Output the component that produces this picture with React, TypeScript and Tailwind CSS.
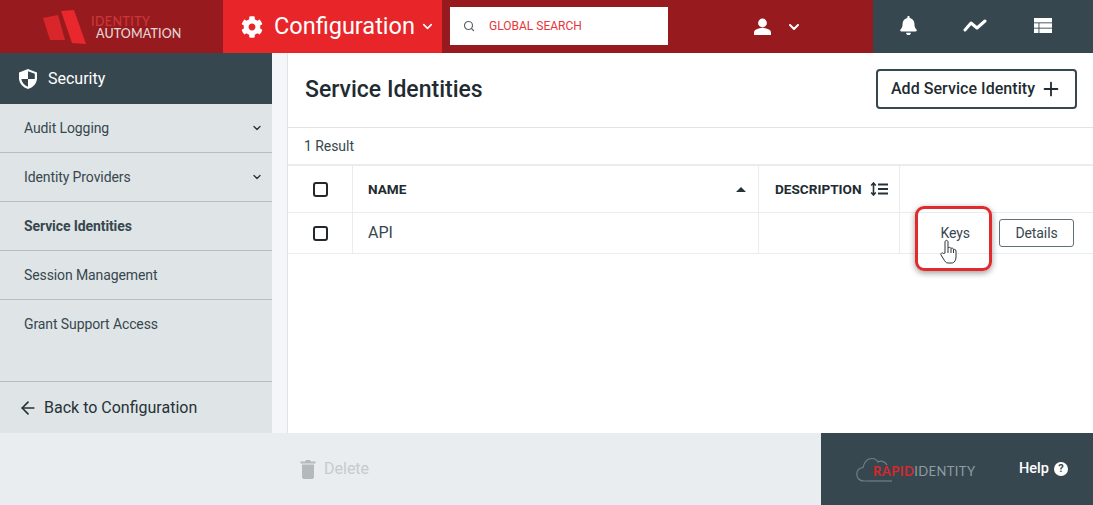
import { ChevronDown, Plus, Search, ArrowLeft } from "lucide-react";
import { FaBell, FaCog } from "react-icons/fa";

const navItems = [
  { label: "Audit Logging", chevron: true },
  { label: "Identity Providers", chevron: true },
  { label: "Service Identities", active: true },
  { label: "Session Management" },
  { label: "Grant Support Access", last: true },
];

const Checkbox = () => (
  <div className="w-[15px] h-[15px] rounded-[3px] border-2 border-[#23282c] bg-white" />
);

const App = () => {
  return (
    <div className="w-[1093px] h-[505px] relative overflow-hidden flex flex-col bg-white text-[#263238] font-['Roboto',sans-serif]">
      {/* top bar */}
      <header className="h-[53px] flex shrink-0 bg-[#971b1e]">
        <div className="w-[223px] flex items-center pl-[42px]">
          <svg width="46" height="36" viewBox="0 0 46 36" className="shrink-0">
            <path d="M1 9 L16 6 L23 31 L8 31 Z" fill="#d9262a" />
            <path d="M19 2 L32 1 L44 35 L30 34 Z" fill="#e8282c" />
          </svg>
          <div className="ml-[3px] mt-[3px] text-[12.5px] leading-[12px] font-['Lato',sans-serif]">
            <div className="text-[#c9373a] font-medium tracking-[0.4px]">IDENTITY</div>
            <div className="ml-[5px] text-[#e3d6d6] font-medium tracking-[0.1px]">AUTOMATION</div>
          </div>
        </div>
        <div className="w-[219px] bg-[#e8262a] flex items-center pl-[18px] text-white">
          <FaCog size={22} className="shrink-0" />
          <span className="ml-[11px] text-[23.5px] leading-none whitespace-nowrap">Configuration</span>
          <ChevronDown size={15} strokeWidth={2.5} className="ml-[5px] shrink-0" />
        </div>
        <div className="ml-[8px] mt-[7px] w-[218px] h-[38px] bg-white flex items-center pl-[13px]">
          <Search size={12} className="text-[#5b6469]" strokeWidth={2.4} />
          <span className="ml-[14px] text-[12px] text-[#e8353a]">GLOBAL SEARCH</span>
        </div>
        <div className="w-[205px] flex items-center pl-[85px] text-white">
          <svg width="19" height="17" viewBox="0 0 18 17" fill="white">
            <circle cx="9" cy="5" r="4.4" />
            <path d="M0.5 17 V14.5 C0.5 11.5 5 10 9 10 C13 10 17.5 11.5 17.5 14.5 V17 Z" />
          </svg>
          <ChevronDown size={16} strokeWidth={3} className="ml-[14px]" />
        </div>
        <div className="flex-1 bg-[#37474f] flex items-center text-white pl-[26px] pb-[3px]">
          <FaBell size={19} />
          <svg width="24" height="13" viewBox="0 0 24 13" className="ml-[45px]" fill="none" stroke="white" strokeWidth="3" strokeLinecap="round" strokeLinejoin="round">
            <path d="M2 11 L8 4 L14 9 L22 2" />
          </svg>
          <svg width="18" height="15" viewBox="0 0 18 15" className="ml-[47px]" fill="white">
            <rect x="0" y="0" width="18" height="4.4" />
            <rect x="0" y="5.3" width="4.5" height="4.4" />
            <rect x="5.4" y="5.3" width="12.6" height="4.4" />
            <rect x="0" y="10.6" width="4.5" height="4.4" />
            <rect x="5.4" y="10.6" width="12.6" height="4.4" />
          </svg>
        </div>
      </header>

      <div className="flex flex-1 min-h-0">
        {/* sidebar */}
        <aside className="w-[272px] bg-[#dfe4e6] flex flex-col shrink-0">
          <div className="h-[51px] bg-[#37474f] flex items-center pl-[18px] text-white">
            <svg width="20" height="22" viewBox="0 0 20 22">
              <path d="M10 1 L19 4.5 V10 C19 15.5 15 19.5 10 21 C5 19.5 1 15.5 1 10 V4.5 Z" fill="white" />
              <path d="M10 3.2 L16.8 5.8 V11 H10 Z M10 11 V18.8 C6.5 17.4 3.8 14.5 3.3 11 Z" fill="#37474f" />
            </svg>
            <span className="ml-[10px] text-[16px]">Security</span>
          </div>
          {navItems.map((item) => (
            <div
              key={item.label}
              className={`h-[49px] shrink-0 flex items-center justify-between pl-[24px] pr-[9px] text-[14px] tracking-[-0.1px] text-[#37474f] ${
                item.active ? "font-bold" : ""
              } ${item.last ? "" : "border-b border-[#b4bfc3]"}`}
            >
              {item.label}
              {item.chevron && <ChevronDown size={12} strokeWidth={2.5} className="text-[#263238]" />}
            </div>
          ))}
          <div className="mt-auto h-[52px] border-t border-[#b4bfc3] flex items-center pl-[18px] text-[16px] text-[#263238]">
            <ArrowLeft size={20} strokeWidth={2} />
            <span className="ml-[6px]">Back to Configuration</span>
          </div>
        </aside>
        <div className="w-[16px] bg-[#f4f6f8] border-r border-[#dfe4e6] shrink-0" />

        {/* main */}
        <main className="flex-1 min-w-0 flex flex-col">
          <div className="h-[75px] border-b border-[#dfe4e6] flex items-center justify-between pl-[17px] pr-[16px] shrink-0">
            <h1 className="text-[23px] font-medium text-[#212b31] pt-[1px]">Service Identities</h1>
            <button className="h-[40px] w-[201px] -mt-[3px] border-2 border-[#37474f] rounded-[4px] flex items-center justify-center text-[16px] font-medium tracking-[0.05px] text-[#212b31]">
              Add Service Identity
              <Plus size={22} strokeWidth={2} className="ml-[5px]" />
            </button>
          </div>
          <div className="h-[36px] flex items-center pl-[16px] pt-[1px] text-[14px] tracking-[-0.05px] text-[#37474f] shrink-0">1 Result</div>
          <div className="grid grid-cols-[65px_406px_141px_1fr] border-t-2 border-[#e9edf0] shrink-0">
            <div className="h-[47px] flex items-center justify-center border-r border-b border-[#e9edf0]"><Checkbox /></div>
            <div className="h-[47px] flex items-center justify-between pl-[15px] pr-[12px] border-r border-b border-[#e9edf0] text-[13.6px] font-bold text-[#212b31]">
              NAME
              <span className="w-0 h-0 border-x-[5px] border-x-transparent border-b-[5px] border-b-[#263238]" />
            </div>
            <div className="h-[47px] flex items-center pl-[16px] border-r border-b border-[#e9edf0] text-[13.6px] font-bold text-[#212b31]">
              DESCRIPTION
              <svg width="18" height="14" viewBox="0 0 18 14" className="ml-[8px]" fill="none" stroke="#263238" strokeWidth="1.6">
                <path d="M3.5 1 V13 M1.2 3.5 L3.5 1 L5.8 3.5 M1.2 10.5 L3.5 13 L5.8 10.5" />
                <path d="M8 2.5 H18 M8 7 H18 M8 11.5 H18" strokeWidth="1.8" />
              </svg>
            </div>
            <div className="h-[47px] border-b border-[#e9edf0]" />
            <div className="h-[41px] flex items-center justify-center border-r border-b border-[#e9edf0]"><Checkbox /></div>
            <div className="h-[41px] flex items-center pl-[15px] border-r border-b border-[#e9edf0] text-[16px] text-[#37474f]">API</div>
            <div className="h-[41px] border-r border-b border-[#e9edf0]" />
            <div className="h-[41px] border-b border-[#e9edf0] flex items-center justify-end pr-[19px] gap-[29px]">
              <span className="text-[14px] tracking-[-0.1px] text-[#37474f]">Keys</span>
              <button className="w-[75px] h-[28px] border border-[#607078] rounded-[3px] text-[14px] tracking-[-0.1px] text-[#37474f]">Details</button>
            </div>
          </div>
        </main>
      </div>

      {/* footer */}
      <footer className="h-[72px] flex shrink-0 bg-[#e9edf0]">
        <div className="w-[821px] flex items-center pl-[300px] text-[16px] text-[#c6cbce]">
          <svg width="16" height="20" viewBox="0 0 16 20" fill="#b4b9bb">
            <path d="M0.5 2.5 H5 L6 1 H10 L11 2.5 H15.5 V4.5 H0.5 Z" />
            <path d="M2 5.5 H14 V18 C14 19 13 20 12 20 H4 C3 20 2 19 2 18 Z" />
          </svg>
          <span className="ml-[8px]">Delete</span>
        </div>
        <div className="flex-1 bg-[#37474f] flex items-center pl-[35px] text-white">
          <div className="relative w-[120px] h-[26px]">
            <svg width="42" height="25" viewBox="0 0 42 25" fill="none" stroke="#6f8089" strokeWidth="1.2" className="absolute left-0 top-[1px]">
              <path d="M12 24 H8 C3.5 24 0.8 21 0.8 17 C0.8 13.5 3.5 11 7 10.5 C8 6 11 1.5 16 1.5 C19 1.5 21 3 22 5 C24 3.5 29 4 31 8" />
              <path d="M12 24 H36" />
            </svg>
            <span className="absolute left-[17px] top-[8px] text-[13px] leading-[15px] tracking-[0.4px] font-['Lato',sans-serif] whitespace-nowrap">
              <span className="font-bold text-[#d8282c]">RAPID</span>
              <span className="text-[#8f9da4]">IDENTITY</span>
            </span>
          </div>
          <span className="ml-[43px] text-[14.5px] font-medium -mt-[1px]">Help</span>
          <span className="ml-[5px] w-[14px] h-[14px] rounded-full bg-white text-[#37474f] text-[11px] font-bold flex items-center justify-center">?</span>
        </div>
      </footer>

      {/* callout round the Keys button */}
      <div className="absolute left-[915px] top-[206px] w-[77px] h-[65px] rounded-[9px] border-[3px] border-[#e02a2b] shadow-[0_2px_6px_rgba(0,0,0,0.4)]" />
      {/* hand cursor */}
      <svg width="17" height="25" viewBox="0 0 17 25" className="absolute left-[940px] top-[239px]" fill="white" stroke="#2d3438" strokeWidth="1" strokeLinejoin="round">
        <path d="M5 14 V3 C5 0.8 8 0.8 8 3 V9 C8.5 8 10.5 8 11 9.5 C11.5 8.7 13.3 9 13.5 10.5 C14.2 10 16 10.3 16 12 V18 C16 21 14.5 23.5 12.5 24 H8 C6 24 5 22.5 3.5 20 L1 16 C0.3 14.5 2 13 3.5 14.5 Z" />
        <path d="M8 9 V14 M11 9.5 V14 M13.5 10.5 V14" fill="none" />
      </svg>
    </div>
  );
};

export default App;
